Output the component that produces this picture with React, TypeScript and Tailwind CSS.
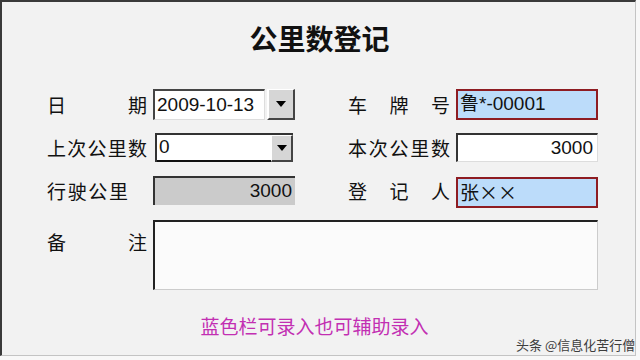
const CJK = "font-['Noto_Sans_CJK_SC',sans-serif]";
const LAT = "font-['Liberation_Sans','Noto_Sans_CJK_SC',sans-serif]";

function Label({ chars, className = "" }: { chars: string[]; className?: string }) {
  return (
    <div className={`flex justify-between text-[19px] leading-none text-[#111] ${CJK} ${className}`}>
      {chars.map((c, i) => (
        <span key={i}>{c}</span>
      ))}
    </div>
  );
}

function DropButton({ className = "" }: { className?: string }) {
  return (
    <div className={`flex items-center justify-center bg-[#d6d6d6] border-t border-l border-t-[#fff] border-l-[#fff] border-r-2 border-b-2 border-r-[#444] border-b-[#444] ${className}`}>
      <svg width="10" height="6" viewBox="0 0 10 6">
        <path d="M0 0H10L5 6Z" fill="#000" />
      </svg>
    </div>
  );
}

function BlueField({ value, font = LAT }: { value: string; font?: string }) {
  return (
    <div className={`flex h-[31px] w-[142px] items-center border-2 border-[#8e1c22] bg-[#bcdcfa] px-[2px] text-[19px] text-[#111] ${font}`}>
      {value}
    </div>
  );
}

export default function App() {
  return (
    <div className="relative h-[360px] w-[640px] overflow-hidden bg-[#f8f8f8]">
      <div className="h-[356px] w-[636px] border-l-2 border-t-2 border-r border-b border-l-[#3a3a3a] border-t-[#3a3a3a] border-r-[#c4c4c4] border-b-[#c4c4c4] bg-[#f2f2f2]">
        <div className={`flex h-[72px] items-center justify-center pl-[2px] text-[28px] font-bold text-[#111] ${CJK}`}>
          公里数登记
        </div>

        <div className="flex flex-col gap-[12px] pl-[45px] pt-[15px]">
          {/* row 1 */}
          <div className="flex h-[31px] items-center">
            <Label chars={["日", "期"]} className="w-[100px]" />
            <div className="ml-[6px] flex h-[31px] w-[142px] items-stretch gap-[2px]">
              <div className={`flex flex-1 items-center border-t-2 border-l-2 border-b border-r border-t-[#444] border-l-[#444] border-b-[#ddd] border-r-[#ddd] bg-white px-[2px] text-[19px] text-[#111] ${LAT}`}>
                2009-10-13
              </div>
              <DropButton className="w-[28px] border-l-2 border-l-[#444]" />
            </div>
            <Label chars={["车", "牌", "号"]} className="ml-[53px] w-[102px]" />
            <div className="ml-[6px]">
              <BlueField value="鲁*-00001" />
            </div>
          </div>

          {/* row 2 */}
          <div className="flex h-[31px] items-center">
            <Label chars={["上", "次", "公", "里", "数"]} className="w-[100px]" />
            <div className="ml-[8px] flex h-[29px] w-[138px] items-stretch border-t-2 border-l-2 border-t-[#333] border-l-[#333] bg-white">
              <div className={`flex flex-1 items-center border-b-2 border-b-[#111] px-[2px] text-[19px] text-[#111] ${LAT}`}>
                0
              </div>
              <DropButton className="w-[22px]" />
            </div>
            <Label chars={["本", "次", "公", "里", "数"]} className="ml-[55px] w-[102px]" />
            <div className={`ml-[6px] flex h-[29px] w-[142px] items-center justify-end border-t-2 border-l-2 border-b border-r border-t-[#333] border-l-[#333] border-b-[#ddd] border-r-[#ddd] bg-white px-[4px] text-[19px] text-[#111] ${LAT}`}>
              3000
            </div>
          </div>

          {/* row 3 */}
          <div className="flex h-[31px] items-center">
            <Label chars={["行", "驶", "公", "里"]} className="w-[81px]" />
            <div className={`ml-[25px] flex h-[29px] w-[142px] items-center justify-end border-t-2 border-l-2 border-t-[#333] border-l-[#333] bg-[#cbcbcb] px-[3px] text-[19px] text-[#111] ${LAT}`}>
              3000
            </div>
            <Label chars={["登", "记", "人"]} className="ml-[53px] w-[102px]" />
            <div className="ml-[6px] mt-[3px]">
              <BlueField value="张××" font={CJK} />
            </div>
          </div>

          {/* row 4 */}
          <div className="mt-[2px] flex items-start">
            <Label chars={["备", "注"]} className="mt-[12px] w-[100px]" />
            <div className="ml-[6px] h-[70px] w-[445px] border-t-2 border-l-2 border-b border-r border-t-[#222] border-l-[#222] border-b-[#ccc] border-r-[#ccc] bg-[#fbfbfb]" />
          </div>
        </div>

        <div className={`mt-[26px] pr-[8px] text-center text-[19px] leading-none text-[#c22fb2] ${CJK}`}>
          蓝色栏可录入也可辅助录入
        </div>
      </div>

      <div className={`absolute left-[516px] top-[336px] whitespace-nowrap text-[13px] leading-[18px] text-[#3d3d3d] ${CJK}`}>
        头条 @信息化苦行僧
      </div>
    </div>
  );
}
